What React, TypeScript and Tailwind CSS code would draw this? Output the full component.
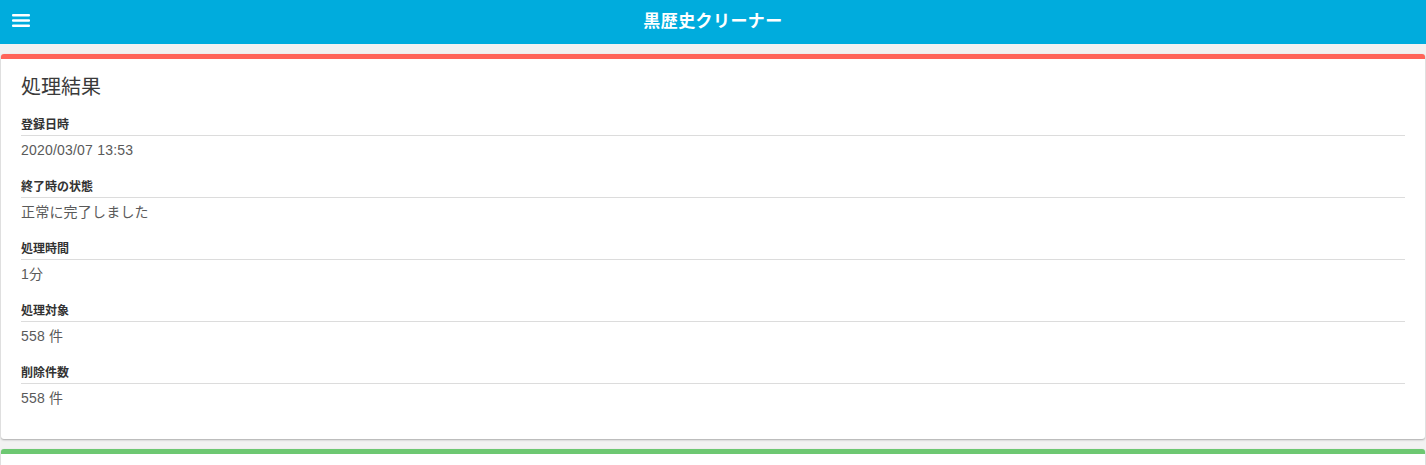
interface ResultField {
  label: string
  value: string
}

const FIELDS: ResultField[] = [
  { label: "登録日時", value: "2020/03/07 13:53" },
  { label: "終了時の状態", value: "正常に完了しました" },
  { label: "処理時間", value: "1分" },
  { label: "処理対象", value: "558 件" },
  { label: "削除件数", value: "558 件" },
]

function Hamburger() {
  return (
    <svg width="18" height="13" viewBox="0 0 18 13" fill="white">
      <rect x="0" y="0" width="18" height="2.4" rx="1" />
      <rect x="0" y="5.3" width="18" height="2.4" rx="1" />
      <rect x="0" y="10.6" width="18" height="2.4" rx="1" />
    </svg>
  )
}

export default function App() {
  return (
    <div
      className="min-h-screen bg-[#f2f2f2]"
      style={{ fontFamily: '"Liberation Sans", "Noto Sans CJK JP", sans-serif' }}
    >
      {/* Header */}
      <header className="relative flex h-[44px] items-center justify-center bg-[#00acdd]">
        <button className="absolute left-[12px] top-[14px] flex">
          <Hamburger />
        </button>
        <h1 className="text-[17px] font-bold tracking-wide text-white">黒歴史クリーナー</h1>
      </header>

      <main className="flex flex-col gap-[10px] px-px pt-[10px]">
        {/* Result card */}
        <section className="rounded-[3px] border-t-[5px] border-[#ff6459] bg-white px-5 pb-[11px] pt-[14px] shadow-[0_1px_2px_rgba(0,0,0,0.3)]">
          <h2 className="mb-[17px] text-[20px] leading-[28px] text-[#3a3a3a]">処理結果</h2>
          {FIELDS.map((f) => (
            <div key={f.label} className="mb-[18px]">
              <div className="border-b border-[#dcdcdc] pb-[2px] text-[12px] font-bold leading-[15px] text-[#333]">
                {f.label}
              </div>
              <div className="pt-[2px] text-[14px] leading-[24px] tracking-[0.2px] text-[#5a5a5a]">{f.value}</div>
            </div>
          ))}
        </section>

        {/* Next card (cut off) */}
        <section className="h-[200px] rounded-[3px] border-t-[5px] border-[#6dc872] bg-white shadow-[0_1px_2px_rgba(0,0,0,0.3)]" />
      </main>
    </div>
  )
}
